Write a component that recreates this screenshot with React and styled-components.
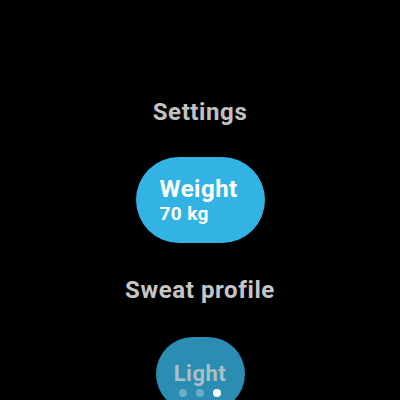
import React from "react";
import styled, { createGlobalStyle } from "styled-components";

const Global = createGlobalStyle`
  html, body { margin: 0; padding: 0; background: #000; }
  body { font-family: Roboto, "Noto Sans", "Liberation Sans", sans-serif; }
`;

const Screen = styled.div`
  position: relative;
  width: 400px;
  height: 400px;
  overflow: hidden;
  background: #000;
`;

const List = styled.div`
  display: flex;
  flex-direction: column;
  align-items: center;
  padding-top: 98px;
`;

const Title = styled.div`
  font-size: 24px;
  line-height: 28px;
  font-weight: 700;
  letter-spacing: 0.6px;
  color: ${(p) => p.$color || "#c4c4c4"};
  margin-top: ${(p) => p.$mt || 0}px;
`;

const Chip = styled.div`
  box-sizing: border-box;
  flex-shrink: 0;
  display: flex;
  flex-direction: column;
  justify-content: center;
  align-items: ${(p) => (p.$center ? "center" : "flex-start")};
  width: ${(p) => p.$w}px;
  height: ${(p) => p.$h}px;
  padding: 0 ${(p) => p.$pad}px;
  margin-top: ${(p) => p.$mt}px;
  border-radius: ${(p) => p.$r || p.$h / 2}px;
  background: ${(p) => p.$bg};
  color: ${(p) => p.$fg};
`;

const ChipLabel = styled.div`
  font-size: ${(p) => p.$size}px;
  line-height: ${(p) => p.$lh}px;
  font-weight: 700;
  letter-spacing: 0.5px;
`;

const ChipValue = styled.div`
  font-size: 19px;
  line-height: 22px;
  font-weight: 700;
  letter-spacing: 0.4px;
`;

const Dots = styled.div`
  position: absolute;
  left: 0;
  right: 0;
  bottom: 3px;
  display: flex;
  justify-content: center;
  gap: 9px;
`;

const Dot = styled.span`
  width: 8px;
  height: 8px;
  border-radius: 50%;
  background: ${(p) => (p.$active ? "#ffffff" : "rgba(255,255,255,0.3)")};
`;

export default function App() {
  return (
    <>
      <Global />
      <Screen>
        <List>
          <Title $color="#c2c2c2">Settings</Title>
          <Chip $w={129} $h={86} $pad={24} $mt={31} $bg="#33b3e4" $fg="#ffffff">
            <ChipLabel $size={24} $lh={28}>Weight</ChipLabel>
            <ChipValue>70 kg</ChipValue>
          </Chip>
          <Title $mt={33} $color="#c6c6c6">Sweat profile</Title>
          <Chip $w={89} $h={74} $r={44} $pad={0} $mt={33} $center $bg="#2a8db1" $fg="#a9c0c8">
            <ChipLabel $size={22} $lh={26}>Light</ChipLabel>
          </Chip>
        </List>
        <Dots>
          <Dot />
          <Dot />
          <Dot $active />
        </Dots>
      </Screen>
    </>
  );
}
